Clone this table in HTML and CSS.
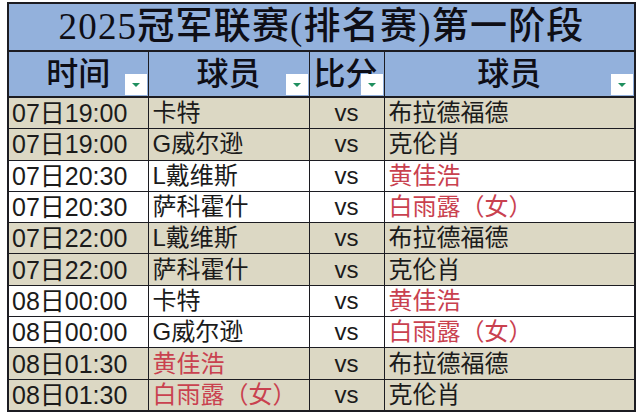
FILE: index.html
```html
<!DOCTYPE html>
<html lang="zh">
<head>
<meta charset="utf-8">
<link rel="stylesheet" href="styles.css">
</head>
<body>
<div class="sheet">
<table class="schedule">
  <colgroup>
    <col class="c-time"><col class="c-p1"><col class="c-vs"><col class="c-p2">
  </colgroup>
  <thead>
    <tr class="title-row"><th colspan="4">2025冠军联赛(排名赛)第一阶段</th></tr>
    <tr class="head-row">
      <th><span class="h-text">时间</span><span class="filter"></span></th>
      <th><span class="h-text">球员</span><span class="filter"></span></th>
      <th class="h-vs"><span class="h-text">比分</span><span class="filter"></span></th>
      <th><span class="h-text">球员</span><span class="filter"></span></th>
    </tr>
  </thead>
  <tbody>
    <tr class="tan"><td class="time">07日19:00</td><td>卡特</td><td class="vs">vs</td><td>布拉德福德</td></tr>
    <tr class="tan"><td class="time">07日19:00</td><td>G威尔逊</td><td class="vs">vs</td><td>克伦肖</td></tr>
    <tr><td class="time">07日20:30</td><td>L戴维斯</td><td class="vs">vs</td><td class="red">黄佳浩</td></tr>
    <tr><td class="time">07日20:30</td><td>萨科霍什</td><td class="vs">vs</td><td class="red">白雨露（女）</td></tr>
    <tr class="tan"><td class="time">07日22:00</td><td>L戴维斯</td><td class="vs">vs</td><td>布拉德福德</td></tr>
    <tr class="tan"><td class="time">07日22:00</td><td>萨科霍什</td><td class="vs">vs</td><td>克伦肖</td></tr>
    <tr><td class="time">08日00:00</td><td>卡特</td><td class="vs">vs</td><td class="red">黄佳浩</td></tr>
    <tr><td class="time">08日00:00</td><td>G威尔逊</td><td class="vs">vs</td><td class="red">白雨露（女）</td></tr>
    <tr class="tan"><td class="time">08日01:30</td><td class="red">黄佳浩</td><td class="vs">vs</td><td>布拉德福德</td></tr>
    <tr class="tan"><td class="time">08日01:30</td><td class="red">白雨露（女）</td><td class="vs">vs</td><td>克伦肖</td></tr>
  </tbody>
</table>
</div>
</body>
</html>
```

FILE: styles.css
```css
html, body {
  margin: 0;
  padding: 0;
  background: #ffffff;
}

.sheet {
  padding: 2px 0 0 7px;
  width: 640px;
  height: 412px;
  box-sizing: border-box;
  overflow: hidden;
}

.schedule {
  border-collapse: collapse;
  table-layout: fixed;
  width: 627px;
  border: 2px solid #1c1c22;
  font-family: "Liberation Sans", "Noto Sans CJK SC", sans-serif;
  color: #1b1b1b;
}

.c-time { width: 140px; }
.c-p1 { width: 161px; }
.c-vs { width: 75px; }
.c-p2 { width: 251px; }

.schedule th,
.schedule td {
  border: 1.5px solid #1c1c22;
  padding: 0;
}

.title-row th {
  height: 46px;
  background: #93b1dc;
  font-family: "Liberation Serif", "Noto Sans CJK SC", serif;
  font-size: 37px;
  font-weight: 500;
  letter-spacing: 1.2px;
  color: #0e0e16;
  text-align: center;
  line-height: 46px;
  border-bottom-width: 2px;
}

.head-row th {
  height: 44px;
  background: #93b1dc;
  position: relative;
  font-family: "Liberation Serif", "Noto Sans CJK SC", serif;
  font-size: 32px;
  font-weight: 500;
  color: #0e0e16;
  text-align: center;
  line-height: 44px;
  overflow: hidden;
  border-bottom-width: 2px;
}

.head-row .h-vs {
  text-align: left;
  padding-left: 4px;
  white-space: nowrap;
}

.filter {
  position: absolute;
  right: 1px;
  bottom: 1px;
  width: 22px;
  height: 21px;
  background: #ffffff;
}

.filter::after {
  content: "";
  position: absolute;
  left: 7px;
  top: 9px;
  border-left: 4px solid transparent;
  border-right: 4px solid transparent;
  border-top: 4px solid #1f8f5f;
}

.schedule td {
  height: 30.3px;
  font-size: 24px;
  line-height: 30px;
  white-space: nowrap;
  padding-left: 4px;
  background: #ffffff;
}

.schedule tr.tan td {
  background: #dcd8c4;
}

.schedule td.time {
  padding-left: 3px;
  font-size: 25px;
}

.schedule td.vs {
  text-align: center;
  padding-left: 0;
  font-size: 24px;
}

.schedule td.red {
  color: #c9414f;
}
```
